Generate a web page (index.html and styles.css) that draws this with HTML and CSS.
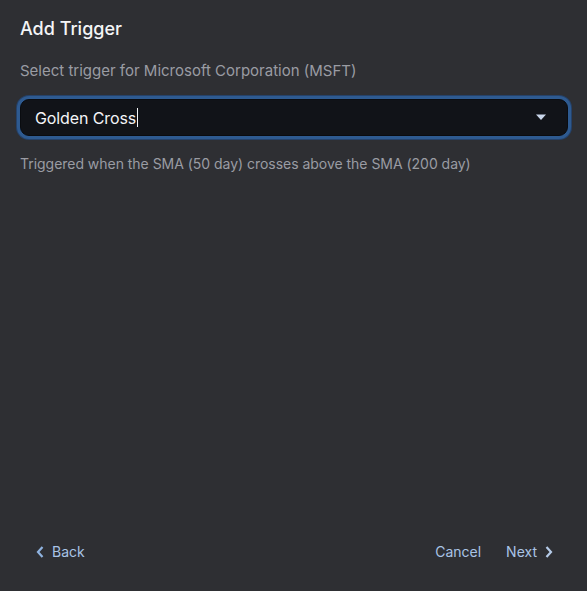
FILE: index.html
```html
<!DOCTYPE html>
<html>
<head>
<meta charset="utf-8">
<link rel="stylesheet" href="styles.css">
</head>
<body>
<div class="dialog">
  <div class="content">
    <h1 class="title">Add Trigger</h1>
    <p class="subtitle">Select trigger for Microsoft Corporation (MSFT)</p>
    <div class="select">
      <span class="value">Golden Cross<span class="caret"></span></span>
      <svg class="arrow" width="12" height="7" viewBox="0 0 12 7"><path d="M1 0.5 L11 0.5 L6 6 Z" fill="#c9d6ea"/></svg>
    </div>
    <p class="helper">Triggered when the SMA (50 day) crosses above the SMA (200 day)</p>
  </div>
  <div class="footer">
    <button class="btn back"><svg width="8" height="12" viewBox="0 0 8 12"><path d="M6.5 1 L2 6 L6.5 11" fill="none" stroke="#8fb3e0" stroke-width="2.2"/></svg>Back</button>
    <div class="right">
      <button class="btn">Cancel</button>
      <button class="btn next">Next<svg width="8" height="12" viewBox="0 0 8 12"><path d="M1.5 1 L6 6 L1.5 11" fill="none" stroke="#b5cbe8" stroke-width="2.2"/></svg></button>
    </div>
  </div>
</div>
</body>
</html>
```

FILE: styles.css
```css
html, body {
  margin: 0;
  padding: 0;
  background: #2e2f33;
}
body {
  font-family: Inter, "Noto Sans", sans-serif;
  width: 587px;
  height: 591px;
  overflow: hidden;
}
.dialog {
  height: 591px;
  display: flex;
  flex-direction: column;
  justify-content: space-between;
}
.content {
  padding: 16px 19px 0 20px;
}
.title {
  margin: 0;
  font-size: 18px;
  font-weight: 500;
  color: #f4f5f7;
  line-height: 26px;
}
.subtitle {
  margin: 19px 0 0;
  font-size: 15px;
  color: #9a9ca3;
  line-height: 20px;
}
.select {
  margin: 18px 0 0;
  height: 35px;
  border: 1px solid #0a0c10;
  border-radius: 9px;
  background: #111318;
  box-shadow: 0 0 0 3px #2e5a90, 0 0 0 4px #25426a;
  display: flex;
  align-items: center;
  justify-content: space-between;
  padding: 0 20px 0 14px;
}
.value {
  font-size: 16px;
  color: #f4f5f7;
  display: flex;
  align-items: center;
  letter-spacing: -0.1px;
}
.caret {
  display: inline-block;
  width: 1px;
  height: 19px;
  background: #f4f5f7;
  margin-left: 1px;
}
.arrow {
  display: block;
}
.helper {
  margin: 18px 0 0;
  font-size: 14px;
  color: #9a9ca3;
  line-height: 20px;
  letter-spacing: -0.03px;
}
.footer {
  display: flex;
  justify-content: space-between;
  align-items: center;
  padding: 0 34px 29px 36px;
}
.right {
  display: flex;
  gap: 25px;
}
.btn {
  background: none;
  border: none;
  padding: 0;
  font-family: Inter, "Noto Sans", sans-serif;
  font-size: 14px;
  color: #a9c4e6;
  display: flex;
  align-items: center;
  gap: 8px;
  line-height: 20px;
}
```
